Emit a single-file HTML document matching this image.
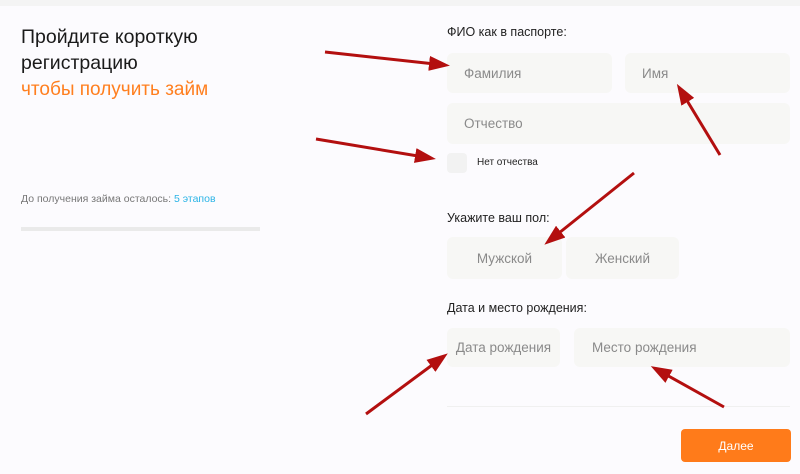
<!DOCTYPE html>
<html><head><meta charset="utf-8"><style>
*{margin:0;padding:0;box-sizing:border-box}
body{width:800px;height:474px;background:#fcfbfe;font-family:"Liberation Sans",sans-serif;position:relative;overflow:hidden;color:#222}
.a{position:absolute}
.f{position:absolute;background:#f7f7f5;border-radius:6px;color:#8a8a8a;font-size:13.5px;display:flex;align-items:center}
.lbl{position:absolute;font-size:12.5px;color:#222;left:447px}
</style></head><body>
<div class="a" style="left:0;top:0;width:800px;height:6px;background:#f4f4f4"></div>
<div class="a" style="left:21px;top:24px;font-size:19.5px;line-height:26px;color:#1a1a1a">Пройдите короткую<br>регистрацию<br><span style="color:#ff7f1f;font-size:19px">чтобы получить займ</span></div>
<div class="a" style="left:21px;top:193px;font-size:10.5px;color:#777">До получения займа осталось: <span style="color:#2bb4e6">5 этапов</span></div>
<div class="a" style="left:21px;top:227px;width:239px;height:4px;background:#eaeaea"></div>

<div class="lbl" style="top:25px">ФИО как в паспорте:</div>
<div class="f" style="left:447px;top:53px;width:165px;height:40px;padding-left:17px">Фамилия</div>
<div class="f" style="left:625px;top:53px;width:165px;height:40px;padding-left:17px">Имя</div>
<div class="f" style="left:447px;top:103px;width:343px;height:41px;padding-left:17px">Отчество</div>
<div class="a" style="left:447px;top:153px;width:20px;height:20px;background:#f2f2f2;border-radius:4px"></div>
<div class="a" style="left:477px;top:157px;font-size:10px;color:#222">Нет отчества</div>

<div class="lbl" style="top:211px">Укажите ваш пол:</div>
<div class="f" style="left:447px;top:237px;width:115px;height:42px;justify-content:center">Мужской</div>
<div class="f" style="left:566px;top:237px;width:113px;height:42px;justify-content:center">Женский</div>

<div class="lbl" style="top:301px">Дата и место рождения:</div>
<div class="f" style="left:447px;top:328px;width:113px;height:39px;justify-content:center">Дата рождения</div>
<div class="f" style="left:574px;top:328px;width:216px;height:39px;padding-left:18px">Место рождения</div>
<div class="a" style="left:447px;top:406px;width:343px;height:1px;background:#f0f0f0"></div>
<div class="a" style="left:681px;top:429px;width:110px;height:33px;background:#ff7b1a;border-radius:4px;color:#fff;font-size:12px;display:flex;align-items:center;justify-content:center">Далее</div>

<svg class="a" style="left:0;top:0" width="800" height="474">
<defs><marker id="m" markerWidth="7" markerHeight="5" refX="5" refY="2.5" orient="auto" markerUnits="strokeWidth"><path d="M0,0 L7,2.5 L0,5 Z" fill="#b30f0f"/></marker></defs>
<g stroke="#b30f0f" stroke-width="3" marker-end="url(#m)" fill="none">
<line x1="325" y1="52" x2="444" y2="65"/>
<line x1="316" y1="139" x2="430" y2="158"/>
<line x1="720" y1="155" x2="680" y2="89"/>
<line x1="634" y1="173" x2="549" y2="241"/>
<line x1="366" y1="414" x2="443" y2="357"/>
<line x1="724" y1="407" x2="656" y2="369"/>
</g></svg>
</body></html>
